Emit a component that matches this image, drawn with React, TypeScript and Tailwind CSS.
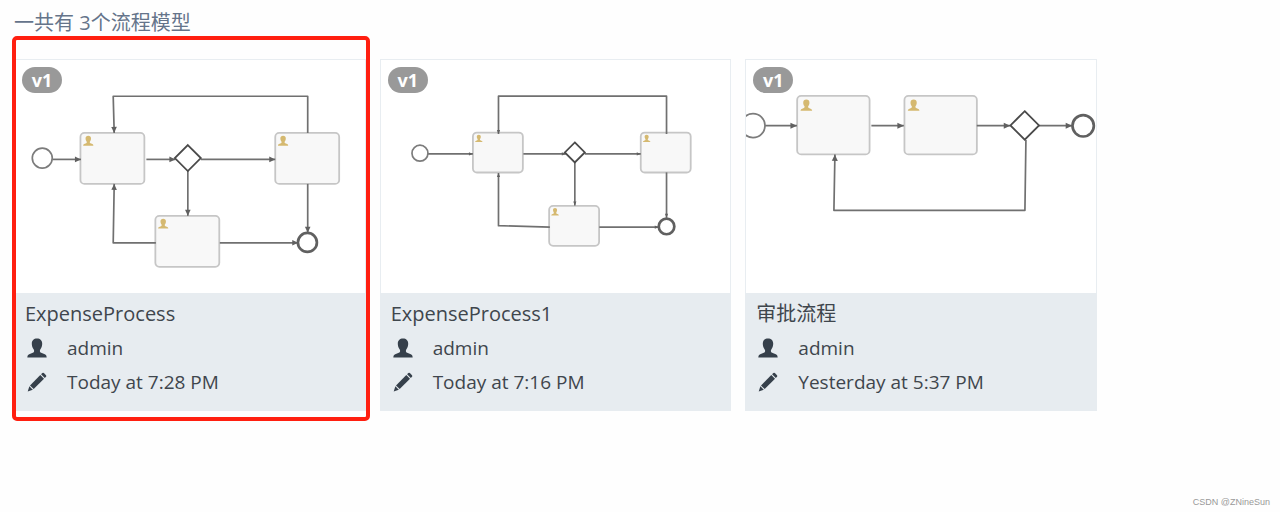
import React from 'react';

type Point = [number, number];

interface Diagram {
  taskWidth: number;
  taskHeight: number;
  iconSize: number;
  iconOffset: number;
  arrowLength: number;
  arrowWidth: number;
  start: { at: Point; r: number };
  end: { at: Point; r: number };
  gateway: { at: Point; r: number };
  tasks: Point[];
  flows: Point[][];
}

interface ProcessModel {
  name: string;
  author: string;
  updated: string;
  version: string;
  highlighted?: boolean;
  diagram: Diagram;
}

const models: ProcessModel[] = [
  {
    name: 'ExpenseProcess',
    author: 'admin',
    updated: 'Today at 7:28 PM',
    version: 'v1',
    highlighted: true,
    diagram: {
      taskWidth: 64,
      taskHeight: 51,
      iconSize: 10.5,
      iconOffset: 2.6,
      arrowLength: 6,
      arrowWidth: 2.8,
      start: { at: [27.3, 98.2], r: 10 },
      end: { at: [292.7, 182.6], r: 9.5 },
      gateway: { at: [173, 98.2], r: 13 },
      tasks: [[65.5, 73], [260.5, 73], [140.5, 156]],
      flows: [
        [[38, 99.5], [66, 99.5]],
        [[131.5, 99.5], [160.5, 99.5]],
        [[186, 99.5], [260.5, 99.5]],
        [[173, 111], [173, 156]],
        [[293, 73], [293, 36.3], [98.3, 36.3], [99.3, 73]],
        [[293, 124], [293, 173]],
        [[205, 183], [283.5, 183]],
        [[141, 183], [98.3, 183], [99.3, 124]],
      ],
    },
  },
  {
    name: 'ExpenseProcess1',
    author: 'admin',
    updated: 'Today at 7:16 PM',
    version: 'v1',
    diagram: {
      taskWidth: 50,
      taskHeight: 40,
      iconSize: 7.8,
      iconOffset: 2,
      arrowLength: 4,
      arrowWidth: 1.6,
      start: { at: [39, 93.3], r: 8 },
      end: { at: [285.8, 166.6], r: 7.8 },
      gateway: { at: [194, 92.5], r: 10 },
      tasks: [[92, 72.6], [260, 72.6], [168.3, 146]],
      flows: [
        [[47, 94], [92, 94]],
        [[142.5, 94], [185, 94]],
        [[204, 94], [260, 94]],
        [[194, 102], [194, 145.7]],
        [[285.8, 74], [285.8, 36.2], [117.6, 36.2], [117.6, 74]],
        [[285.8, 112.5], [285.8, 158]],
        [[218.5, 167.3], [278, 167.3]],
        [[169, 167.3], [117.6, 165.8], [117.6, 113]],
      ],
    },
  },
  {
    name: '审批流程',
    author: 'admin',
    updated: 'Yesterday at 5:37 PM',
    version: 'v1',
    diagram: {
      taskWidth: 72.5,
      taskHeight: 58.5,
      iconSize: 12,
      iconOffset: 3.2,
      arrowLength: 6.5,
      arrowWidth: 3,
      start: { at: [7, 65.7], r: 12 },
      end: { at: [337.5, 65.9], r: 10.7 },
      gateway: { at: [279, 65.5], r: 14.3 },
      tasks: [[51.2, 36], [158.6, 36]],
      flows: [
        [[19, 65.7], [51, 65.7]],
        [[125.5, 65.7], [158, 65.7]],
        [[231, 65.7], [264.5, 65.7]],
        [[293, 65.7], [326.5, 65.7]],
        [[280.2, 80], [279.2, 150.5], [88, 150.5], [89, 94.5]],
      ],
    },
  },
];

const userPath =
  'M10 0.6C6.8 0.6 4.7 2.6 4.8 5.8C4.8 7.4 5.3 9.6 6.4 11C7 11.8 7.2 12.4 7.1 13.2C7 14 6.6 14.4 5.8 14.8L2.2 16.3C1 16.9 0.5 17.6 0.3 19.4H19.7C19.5 17.6 19 16.9 17.8 16.3L14.2 14.8C13.4 14.4 13 14 12.9 13.2C12.8 12.4 13 11.8 13.6 11C14.7 9.6 15.2 7.4 15.2 5.8C15.3 2.6 13.2 0.6 10 0.6Z';

const UserIcon: React.FC = () => (
  <svg viewBox="0 0 20 20" className="w-5 h-5" fill="currentColor" aria-hidden="true">
    <path d={userPath} />
  </svg>
);

const PencilIcon: React.FC = () => (
  <svg viewBox="0 0 20 20" className="w-5 h-5" fill="currentColor" aria-hidden="true">
    <path d="M15.3 1.1Q16.1 0.4 16.9 1.1L19 3.2Q19.7 4 19 4.8L17.8 6L14.1 2.3Z" />
    <path d="M13.3 3.1L17 6.8L6.7 17.1L3 13.4Z" />
    <path d="M2.4 14.3L5.8 17.7L0.7 19.4Z" />
  </svg>
);

const arrowHead = (flow: Point[], length: number, width: number) => {
  const [x, y] = flow[flow.length - 1];
  const [px, py] = flow[flow.length - 2];
  const d = Math.hypot(x - px, y - py);
  const ux = (x - px) / d;
  const uy = (y - py) / d;
  const bx = x - ux * length;
  const by = y - uy * length;
  return `${x},${y} ${bx - uy * width},${by + ux * width} ${bx + uy * width},${by - ux * width}`;
};

const ProcessDiagram: React.FC<{ diagram: Diagram; name: string }> = ({ diagram, name }) => {
  const { start, end, gateway } = diagram;
  const [gx, gy] = gateway.at;
  return (
    <svg viewBox="0 0 350 233" className="block w-full" role="img" aria-label={name} fill="none">
      {diagram.tasks.map(([x, y]) => (
        <g key={`${x}-${y}`}>
          <rect
            x={x}
            y={y}
            width={diagram.taskWidth}
            height={diagram.taskHeight}
            rx={4}
            fill="#f8f8f8"
            stroke="#c6c6c6"
            strokeWidth={1.8}
          />
          <path
            d={userPath}
            fill="#d5b970"
            transform={`translate(${x + diagram.iconOffset} ${y + diagram.iconOffset}) scale(${diagram.iconSize / 20})`}
          />
        </g>
      ))}
      {diagram.flows.map((flow, i) => (
        <g key={i}>
          <polyline points={flow.join(' ')} stroke="#707070" strokeWidth={1.7} strokeLinejoin="round" />
          <polygon points={arrowHead(flow, diagram.arrowLength, diagram.arrowWidth)} fill="#606060" />
        </g>
      ))}
      <circle cx={start.at[0]} cy={start.at[1]} r={start.r} fill="#fff" stroke="#7c7c7c" strokeWidth={1.7} />
      <circle cx={end.at[0]} cy={end.at[1]} r={end.r} fill="#fff" stroke="#606060" strokeWidth={2.7} />
      <polygon
        points={`${gx},${gy - gateway.r} ${gx + gateway.r},${gy} ${gx},${gy + gateway.r} ${gx - gateway.r},${gy}`}
        fill="#fff"
        stroke="#4a4a4a"
        strokeWidth={1.8}
      />
    </svg>
  );
};

const ModelCard: React.FC<{ model: ProcessModel }> = ({ model }) => {
  return (
    <article className="relative">
      <div className="border border-b-0 border-[#e8edf1] bg-white">
        <ProcessDiagram diagram={model.diagram} name={model.name} />
      </div>
      {/* Version badge */}
      <span className="absolute left-2 top-2 flex h-[26px] w-10 items-center justify-center rounded-full bg-[#999999] text-[18px] font-bold text-white">
        {model.version}
      </span>

      {/* Model details */}
      <div className="bg-[#e7ecf0] px-[11px] pt-1 pb-3 text-[19px] leading-[34px] text-[#3f464d]">
        <h2 className="truncate text-[20px]">{model.name}</h2>
        <p className="flex items-center gap-5 pl-[2px]">
          <span className="text-[#36404b]"><UserIcon /></span>
          {model.author}
        </p>
        <p className="flex items-center gap-5 pl-[2px]">
          <span className="text-[#36404b]"><PencilIcon /></span>
          {model.updated}
        </p>
      </div>

      {model.highlighted && (
        <div className="pointer-events-none absolute -top-[23px] -right-1 -bottom-[10px] -left-[2px] rounded-[5px] border-4 border-[#ff1f10]" />
      )}
    </article>
  );
};

const App: React.FC = () => {
  return (
    <div className="flex min-h-screen flex-col bg-[#fefefe] font-['Open_Sans','Noto_Sans_CJK_SC',sans-serif]">
      <main className="px-[14px] pt-[9px]">
        <h1 className="text-[20px] leading-7 text-[#65748a]">一共有 3个流程模型</h1>
        <div className="mt-[22px] grid max-w-[1083px] grid-cols-[repeat(auto-fill,minmax(300px,1fr))] gap-[14px]">
          {models.map((model) => (
            <ModelCard key={model.name} model={model} />
          ))}
        </div>
      </main>
      <footer className="mt-auto px-[10px] pb-1 text-right font-['Liberation_Sans',sans-serif] text-[9px] leading-3 text-[#999999]">
        CSDN @ZNineSun
      </footer>
    </div>
  );
};

export default App;
